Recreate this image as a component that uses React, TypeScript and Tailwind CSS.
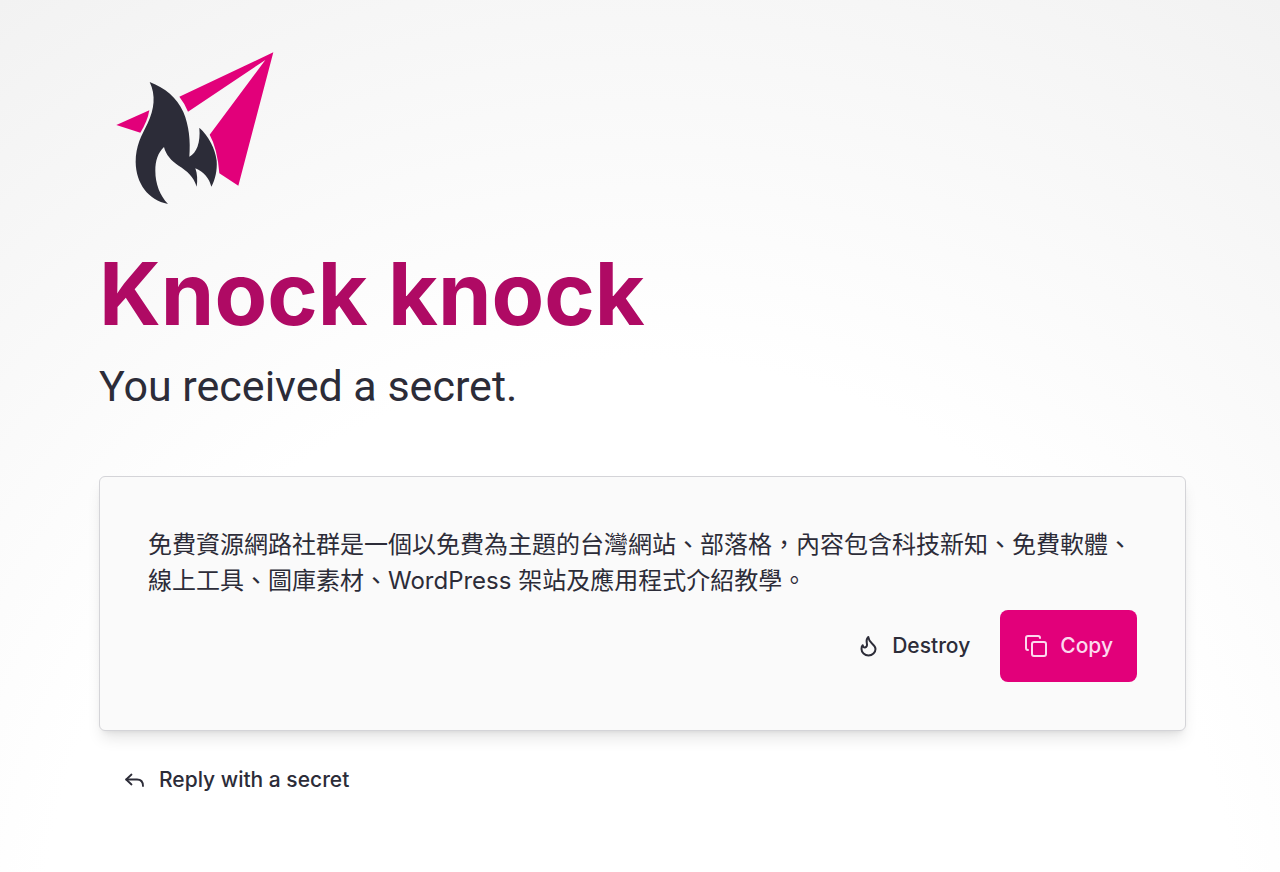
import { useState } from 'react';
import { Copy } from 'lucide-react';

const secret =
  '免費資源網路社群是一個以免費為主題的台灣網站、部落格，內容包含科技新知、免費軟體、線上工具、圖庫素材、WordPress 架站及應用程式介紹教學。';

function Logo() {
  return (
    <svg viewBox="-3 0 570 540" className="h-[180px] w-[190px]" role="img" aria-label="Logo">
      <g fill="#e2007a">
        <path d="M520 37 L238 170 Q254 190 264 215 L496 60 L329 284 Q352 325 358 400 L415 437 Z" />
        <path d="M49 255 L148 211 Q143 243 121 278 Z" />
      </g>
      <g fill="#2c2c38">
        <path d="M149 126 C196 144 230 172 250 216 C267 256 272 304 268 350 C290 338 302 308 298 263 C326 288 346 326 350 362 C352 390 346 418 334 440 C328 416 312 396 286 385 C292 402 293 420 290 440 C280 408 262 394 236 377 C214 363 197 343 192 321 C174 338 166 362 166 392 C166 432 180 466 204 492 C144 480 108 430 107 366 C107 318 124 288 143 250 C163 208 168 166 149 126 Z" />
      </g>
    </svg>
  );
}

function FlameIcon() {
  return (
    <svg
      viewBox="0 0 24 24"
      className="size-6"
      fill="none"
      stroke="currentColor"
      strokeWidth="2"
      strokeLinecap="round"
      strokeLinejoin="round"
      aria-hidden="true"
    >
      <path d="M12.3 3 C12.6 5.8 14 7.6 16 9.4 C18 11.2 19.5 12.8 19.5 15 A6.9 6.4 0 0 1 5.5 15 C5.5 13.4 5.9 12 6.7 11.2 C7.2 13 8 13.6 9 13.4 C11 13 11.3 11.2 10.8 9 C10.3 6.6 10.4 4.8 12.3 3 Z" />
    </svg>
  );
}

function ReplyIcon() {
  return (
    <svg
      viewBox="0 0 24 24"
      className="size-6"
      fill="none"
      stroke="currentColor"
      strokeWidth="1.8"
      strokeLinecap="round"
      strokeLinejoin="round"
      aria-hidden="true"
    >
      <path d="M8.5 6.5 L3.2 11.5 L8.5 16.5" />
      <path d="M3.2 11.5 H14 C18 11.5 20 13.5 20 18" />
    </svg>
  );
}

export default function App() {
  const [destroyed, setDestroyed] = useState(false);

  return (
    <div className="min-h-screen bg-white bg-[radial-gradient(circle_at_50%_110%,#ffffff_52%,#f2f2f2_100%)] pt-10 pr-[94px] pb-6 pl-[99px] font-[Inter,'Noto_Sans_CJK_TC',sans-serif] text-[#2c2c38]">
      <header>
        <Logo />
        <h1 className="mt-[30px] text-[86px] leading-[88px] font-bold text-[#af0a64]">
          Knock knock
        </h1>
        <p className="mt-5 font-[Roboto,sans-serif] text-[43px] leading-[56px]">
          You received a secret.
        </p>
      </header>

      <main className="mt-[62px]">
        <section className="rounded-md border border-[#d4d4d8] bg-[#fafafa] px-12 pt-[50px] pb-12 shadow-lg">
          <p lang="zh-Hant" className="min-h-[72px] text-2xl leading-9">
            {destroyed ? '' : secret}
          </p>
          <div className="mt-[11px] flex justify-end gap-1.5">
            <button
              type="button"
              onClick={() => setDestroyed(true)}
              className="flex h-[72px] items-center gap-3 px-6 text-[21px] font-medium"
            >
              <FlameIcon />
              Destroy
            </button>
            <button
              type="button"
              onClick={() => navigator.clipboard.writeText(secret)}
              className="flex h-[72px] items-center gap-3 rounded-lg bg-[#e2007a] px-6 text-[21px] font-medium text-[#fcd9ee]"
            >
              <Copy className="size-6" />
              Copy
            </button>
          </div>
        </section>
        <a
          href="#reply"
          className="mt-[13px] inline-flex h-[72px] items-center gap-3 px-6 text-[21px] font-medium"
        >
          <ReplyIcon />
          Reply with a secret
        </a>
      </main>
    </div>
  );
}
